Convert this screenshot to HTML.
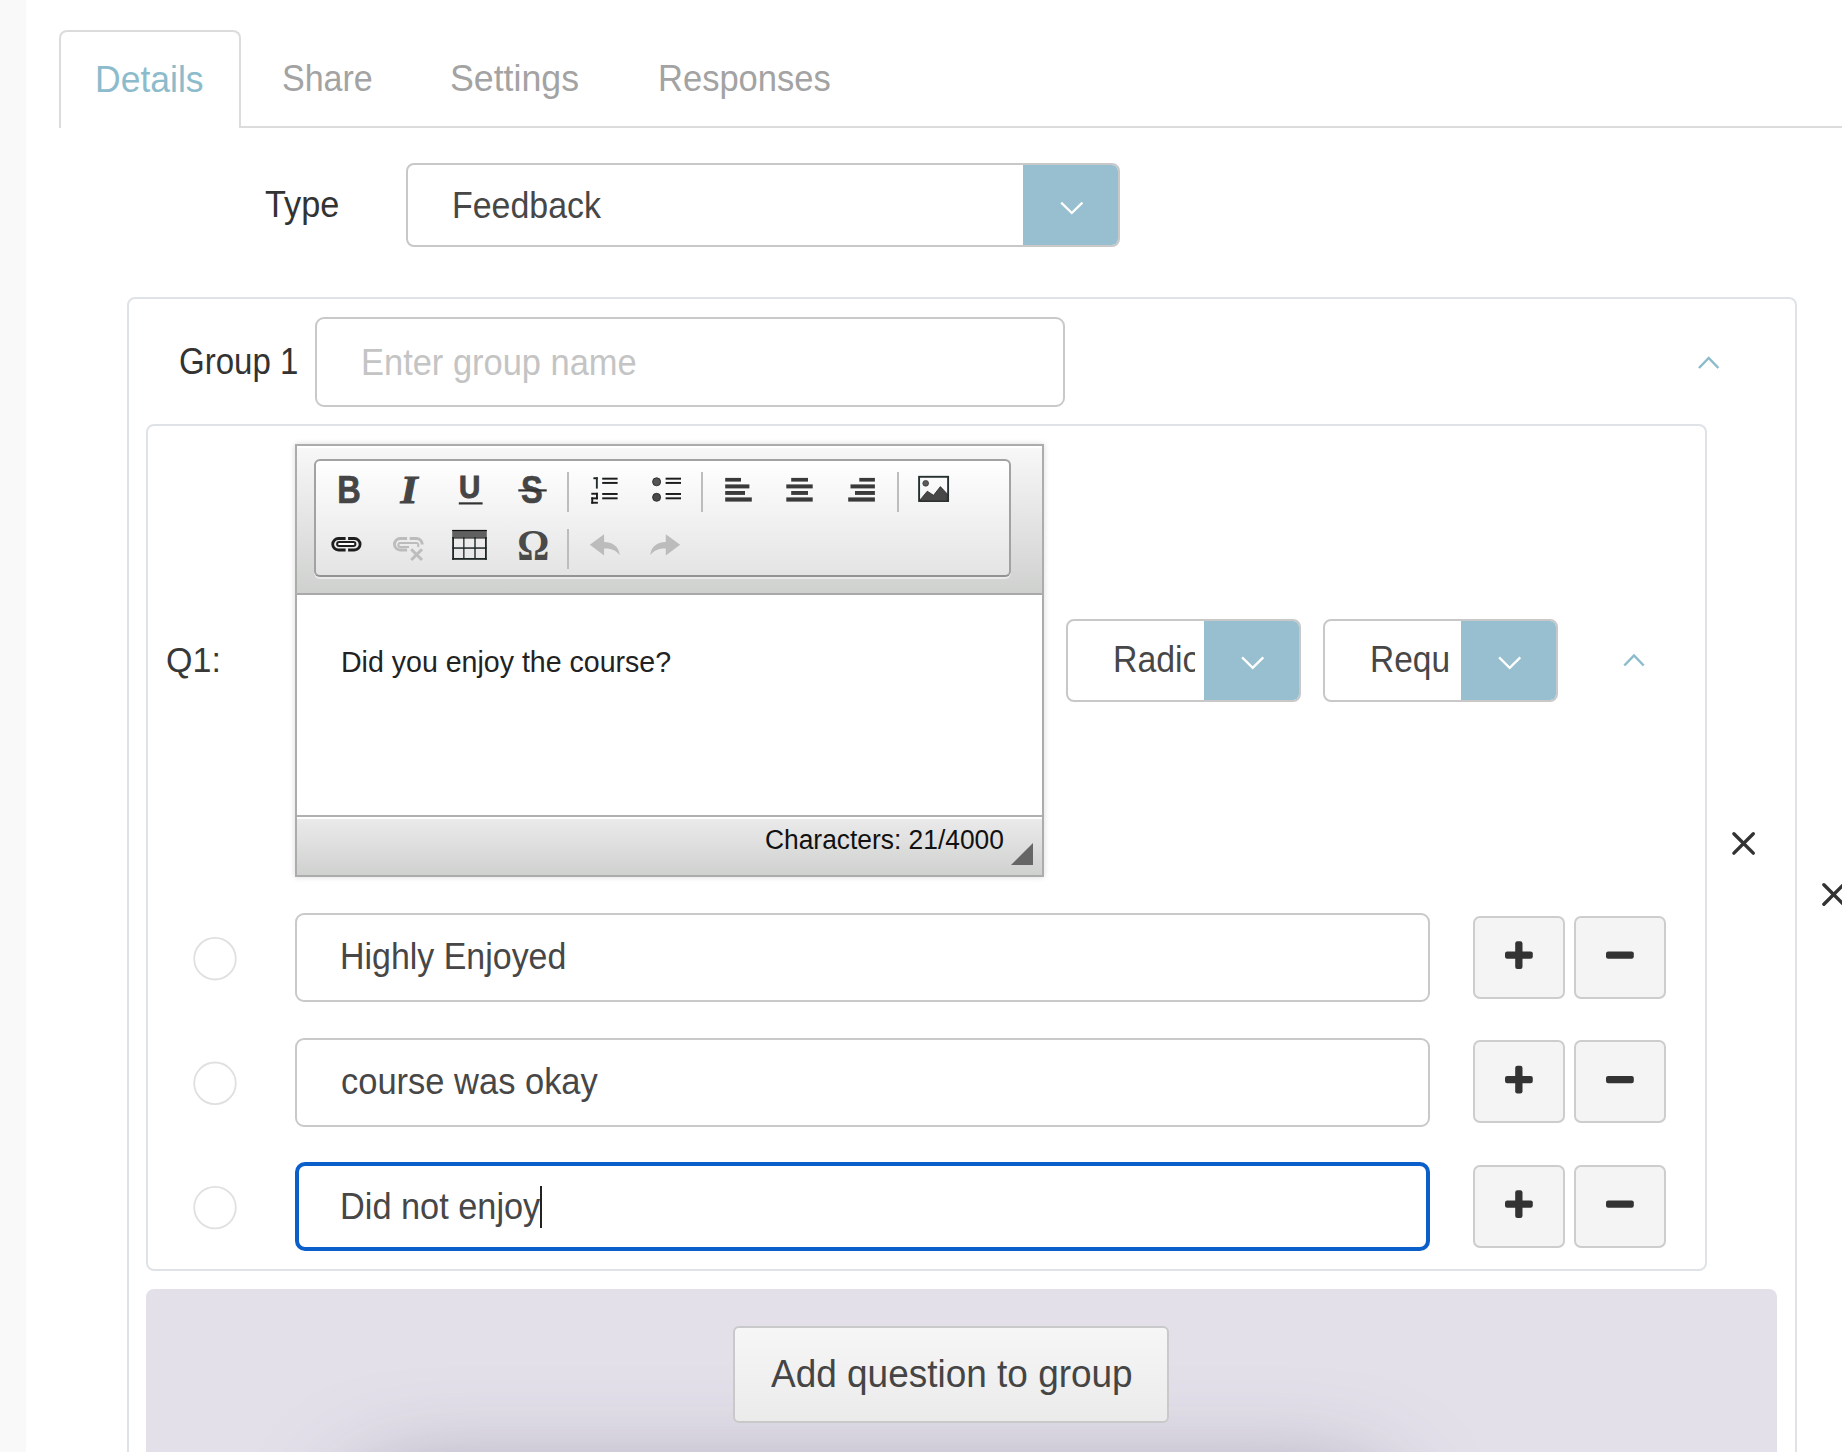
<!DOCTYPE html>
<html><head><meta charset="utf-8">
<style>
html,body{margin:0;padding:0;width:1842px;height:1452px;overflow:hidden;background:#fff;font-family:"Liberation Sans",sans-serif;}
.a{position:absolute;box-sizing:border-box;}
.t{position:absolute;white-space:nowrap;line-height:1;transform-origin:0 0;}
#strip{left:0;top:0;width:26px;height:1452px;background:#f9f9f9;}
#tab{left:59px;top:30px;width:182px;height:98px;border:2px solid #dcdcdc;border-bottom:none;border-radius:8px 8px 0 0;background:#fff;}
#tabline{left:239px;top:126px;width:1603px;height:2px;background:#dcdcdc;}
.tabtxt{font-size:36px;color:#a3a3a3;}
.dd{border:2px solid #c8c8c8;border-radius:8px;background:#fff;overflow:hidden;}
.ddb{position:absolute;top:0;bottom:0;right:0;background:#97bfcf;}
.box{border:2px solid #dfe3e7;border-radius:8px;}
.inp{border:2px solid #c9c9c9;border-radius:9px;background:#fff;}
.btn{border:2px solid #cdcdcd;border-radius:7px;background:#f4f4f4;}
.opt{font-size:36px;color:#474747;}
#svg{position:absolute;left:0;top:0;width:1842px;height:1452px;}
</style></head><body>
<div class="a" id="strip"></div>
<div class="a" id="tab"></div>
<div class="a" id="tabline"></div>
<div class="t tabtxt" style="left:94.7px;top:61.5px;transform:scaleX(0.9868);color:#8cbbcc;">Details</div>
<div class="t tabtxt" style="left:281.5px;top:61.2px;transform:scaleX(0.9441);">Share</div>
<div class="t tabtxt" style="left:449.8px;top:61px;transform:scaleX(0.9921);">Settings</div>
<div class="t tabtxt" style="left:657.6px;top:61px;transform:scaleX(0.9591);">Responses</div>

<div class="t" style="left:265.2px;top:185.8px;font-size:37px;color:#333;transform:scaleX(0.9269);">Type</div>
<div class="a dd" style="left:406px;top:163px;width:714px;height:84px;">
  <div class="ddb" style="width:95px;"></div>
</div>
<div class="t opt" style="left:451.7px;top:187.6px;transform:scaleX(0.9419);">Feedback</div>

<div class="a box" style="left:127px;top:297px;width:1670px;height:1300px;"></div>
<div class="t" style="left:178.9px;top:344.2px;font-size:36px;color:#333;transform:scaleX(0.918);">Group 1</div>
<div class="a inp" style="left:315px;top:317px;width:750px;height:90px;"></div>
<div class="t" style="left:360.5px;top:344.6px;font-size:36px;color:#c4c4c4;transform:scaleX(0.9567);">Enter group name</div>

<div class="a box" style="left:146px;top:424px;width:1561px;height:847px;"></div>
<div class="t" style="left:165.9px;top:642.8px;font-size:34.5px;color:#383838;transform:scaleX(0.9863);">Q1:</div>

<!-- editor -->
<div class="a" style="left:295px;top:444px;width:749px;height:433px;border:2px solid #acacac;box-shadow:0 0 6px rgba(0,0,0,.15);background:#fff;"></div>
<div class="a" style="left:297px;top:446px;width:745px;height:149px;background:linear-gradient(#f8f8f8,#cfd1cf);border-bottom:2px solid #a9a9a9;box-shadow:inset 0 2px 0 #fff;"></div>
<div class="a" style="left:314px;top:459px;width:697px;height:118px;border:2px solid #a2a2a2;border-bottom-color:#939393;border-radius:6px;background:linear-gradient(#fff,#e4e4e4);box-shadow:0 2px 0 rgba(255,255,255,.5);"></div>
<div class="a" style="left:297px;top:815px;width:745px;height:60px;background:linear-gradient(#ebebeb,#cfd1cf);border-top:2px solid #b0b0b0;box-shadow:inset 0 2px 0 #fff;"></div>
<div class="t" style="left:765.3px;top:826.5px;font-size:27px;color:#111;transform:scaleX(0.9765);">Characters: 21/4000</div>
<div class="t" style="left:340.7px;top:646.5px;font-size:30px;color:#222;transform:scaleX(0.9517);">Did you enjoy the course?</div>

<div class="a dd" style="left:1066px;top:619px;width:235px;height:83px;"><div class="ddb" style="width:95px;"></div>
  <div style="position:absolute;left:0;top:0;width:127px;height:79px;overflow:hidden;"><div class="t opt" style="left:44.5px;top:21.3px;transform:scaleX(0.94);">Radio</div></div>
</div>
<div class="a dd" style="left:1323px;top:619px;width:235px;height:83px;"><div class="ddb" style="width:95px;"></div>
  <div style="position:absolute;left:0;top:0;width:125px;height:79px;overflow:hidden;"><div class="t opt" style="left:45.3px;top:21.3px;transform:scaleX(0.9296);">Required</div></div>
</div>

<!-- options -->
<div class="a inp" style="left:295px;top:913px;width:1135px;height:89px;"></div>
<div class="t opt" style="left:340.2px;top:939px;transform:scaleX(0.9426);">Highly Enjoyed</div>
<div class="a btn" style="left:1473px;top:916px;width:92px;height:83px;"></div>
<div class="a btn" style="left:1574px;top:916px;width:92px;height:83px;"></div>

<div class="a inp" style="left:295px;top:1038px;width:1135px;height:89px;"></div>
<div class="t opt" style="left:340.7px;top:1064.1px;transform:scaleX(0.9577);">course was okay</div>
<div class="a btn" style="left:1473px;top:1040px;width:92px;height:83px;"></div>
<div class="a btn" style="left:1574px;top:1040px;width:92px;height:83px;"></div>

<div class="a inp" style="left:295px;top:1162px;width:1135px;height:89px;border:4px solid #0b5fcb;border-radius:10px;"></div>
<div class="t opt" style="left:339.8px;top:1188.7px;transform:scaleX(0.9531);">Did not enjoy</div>
<div class="a" style="left:540px;top:1186px;width:2px;height:42px;background:#222;"></div>
<div class="a btn" style="left:1473px;top:1165px;width:92px;height:83px;"></div>
<div class="a btn" style="left:1574px;top:1165px;width:92px;height:83px;"></div>

<div class="a" style="left:146px;top:1289px;width:1631px;height:200px;background:#e3e0ea;border-radius:8px;overflow:hidden;">
  <div style="position:absolute;left:224px;top:215px;width:1000px;height:100px;border-radius:50px;background:#8a8496;box-shadow:0 0 90px 30px rgba(100,92,116,.5);"></div>
</div>
<div class="a" style="left:733px;top:1326px;width:436px;height:97px;border:2px solid #c9c9c9;border-radius:6px;background:linear-gradient(#f6f6f6,#ebebeb);"></div>
<div class="t" style="left:770.7px;top:1355.2px;font-size:38.5px;color:#454545;transform:scaleX(0.96);">Add question to group</div>

<svg id="svg" viewBox="0 0 1842 1452">
  <!-- down chevrons -->
  <g fill="none" stroke="#fff" stroke-width="2.3" stroke-linecap="butt" stroke-linejoin="miter">
    <polyline points="1061.2,202.6 1071.8,213 1082.4,202.6"/>
    <polyline points="1242.1,657.4 1252.7,667.8 1263.3,657.4"/>
    <polyline points="1499.1,657.4 1509.7,667.8 1520.3,657.4"/>
  </g>
  <!-- up chevrons -->
  <g fill="none" stroke="#8cbbcc" stroke-width="2.5">
    <polyline points="1699,368 1708.7,358 1718.4,368"/>
    <polyline points="1624.3,665.5 1634,655.5 1643.7,665.5"/>
  </g>
  <!-- X icons -->
  <g fill="none" stroke="#333" stroke-width="3.4" stroke-linecap="round">
    <path d="M1733.9,833.7 L1753.3,853.1 M1753.3,833.7 L1733.9,853.1"/>
    <path d="M1823.9,884.8 L1843.3,904.2 M1843.3,884.8 L1823.9,904.2"/>
  </g>
  <!-- radio circles -->
  <g fill="#fff" stroke="#e0e0e0" stroke-width="1.8">
    <circle cx="215" cy="958.7" r="20.8"/>
    <circle cx="215" cy="1083.3" r="20.8"/>
    <circle cx="215" cy="1207.6" r="20.8"/>
  </g>
  <!-- plus / minus -->
  <g fill="#333">
    <rect x="1505" y="951.4" width="27.8" height="7.3" rx="2.2"/><rect x="1515.2" y="941.2" width="7.3" height="27.8" rx="2.2"/>
    <rect x="1606" y="951.4" width="27.8" height="7.3" rx="2.2"/>
    <rect x="1505" y="1075.9" width="27.8" height="7.3" rx="2.2"/><rect x="1515.2" y="1065.7" width="7.3" height="27.8" rx="2.2"/>
    <rect x="1606" y="1075.9" width="27.8" height="7.3" rx="2.2"/>
    <rect x="1505" y="1200.4" width="27.8" height="7.3" rx="2.2"/><rect x="1515.2" y="1190.2" width="7.3" height="27.8" rx="2.2"/>
    <rect x="1606" y="1200.4" width="27.8" height="7.3" rx="2.2"/>
  </g>
  <!-- toolbar separators -->
  <g fill="#bdbdbd">
    <rect x="567" y="472" width="2" height="40"/>
    <rect x="701" y="472" width="2" height="40"/>
    <rect x="897" y="472" width="2" height="40"/>
    <rect x="567" y="529" width="2" height="40"/>
  </g>
  <!-- B I U S -->
  <g fill="#454545" stroke="#454545" stroke-width="0.7" font-family="Liberation Sans" font-weight="bold">
    <text x="0" y="0" font-size="38.8" transform="translate(337.2,502.6) scale(0.84,0.99)">B</text>
    <text x="0" y="0" font-size="38.8" transform="translate(459,497.6) scale(0.76,0.8)" stroke-width="1.2">U</text>
    <text x="0" y="0" font-size="38.8" transform="translate(521,502.6) scale(0.84,0.99)">S</text>
  </g>
  <text x="0" y="0" font-family="Liberation Serif" font-weight="bold" font-style="italic" font-size="38.8" fill="#454545" stroke="#454545" stroke-width="0.9" transform="translate(400.5,502.8) scale(1.13,1.055)">I</text>
  <rect x="458.8" y="502.3" width="23.8" height="2.2" fill="#333"/>
  <rect x="518.3" y="489.3" width="28.4" height="2.2" fill="#333"/>
  <!-- numbered list -->
  <g fill="#1c1c1c">
    <rect x="593.4" y="477.3" width="4.4" height="1.9"/>
    <rect x="595.9" y="477.3" width="1.9" height="11.3" fill="#243030"/>
    <rect x="591.3" y="492.8" width="6.5" height="1.9"/>
    <rect x="596.0" y="492.8" width="1.9" height="6.5"/>
    <rect x="591.3" y="497.4" width="6.6" height="1.9"/>
    <rect x="591.3" y="497.4" width="1.9" height="6.3"/>
    <rect x="591.3" y="501.8" width="6.6" height="1.9"/>
    <rect x="602.2" y="477.7" width="15.4" height="1.95"/>
    <rect x="602.2" y="481.95" width="15.4" height="1.95"/>
    <rect x="602.2" y="493" width="15.4" height="1.95"/>
    <rect x="602.2" y="497.35" width="15.4" height="1.95"/>
  </g>
  <!-- bullet list -->
  <g fill="#1c1c1c">
    <circle cx="656.6" cy="481.8" r="4.0" fill="#555" stroke="#282828" stroke-width="0.9"/>
    <circle cx="656.6" cy="497.3" r="4.0" fill="#4a4a4a" stroke="#282828" stroke-width="0.9"/>
    <rect x="665.6" y="477.7" width="15.4" height="1.95"/>
    <rect x="665.6" y="481.95" width="15.4" height="1.95"/>
    <rect x="665.6" y="493" width="15.4" height="1.95"/>
    <rect x="665.6" y="497.35" width="15.4" height="1.95"/>
  </g>
  <!-- align icons -->
  <g fill="#3a3a3a">
    <rect x="725.2" y="477.9" width="15.8" height="3.7"/>
    <rect x="725.2" y="484.4" width="24.2" height="4"/>
    <rect x="725.2" y="491" width="19.8" height="3.9"/>
    <rect x="725.2" y="497.4" width="26.6" height="4.2"/>
    <rect x="791.2" y="477.9" width="16.8" height="3.7"/>
    <rect x="786.3" y="484.4" width="26.4" height="4"/>
    <rect x="791.2" y="491" width="16.8" height="3.9"/>
    <rect x="786.3" y="497.4" width="26.4" height="4.2"/>
    <rect x="859.3" y="477.9" width="15.6" height="3.7"/>
    <rect x="850.5" y="484.4" width="24.4" height="4"/>
    <rect x="855" y="491" width="19.9" height="3.9"/>
    <rect x="848.2" y="497.4" width="26.7" height="4.2"/>
  </g>
  <!-- image icon -->
  <rect x="919.1" y="476.8" width="29" height="24.2" fill="none" stroke="#263030" stroke-width="1.9"/>
  <circle cx="925.7" cy="483.3" r="2.9" fill="#5a5a5a" stroke="#333" stroke-width="0.7"/>
  <path d="M920,500 L927.3,491.2 L933.5,495.3 L940.4,486.6 L947.3,494 L947.3,501 L920,501 Z" fill="#474747" stroke="#2a2a2a" stroke-width="0.8"/>
  <!-- link -->
  <g fill="none" stroke="#1e1e1e" stroke-width="2.8">
    <path d="M345.6,538.5 L338.45,538.5 A5.75,5.75 0 0 0 338.45,550 L345.6,550"/>
    <path d="M348.1,538.5 L354.35,538.5 A5.75,5.75 0 0 1 354.35,550 L348.1,550"/>
  </g>
  <rect x="337.1" y="542.1" width="18.3" height="4" rx="2" fill="#fff" stroke="#1e1e1e" stroke-width="2"/>
  <!-- unlink -->
  <g fill="none" stroke="#bcbcbc" stroke-width="2.8">
    <path d="M407.1,538.5 L400.2,538.5 A5.75,5.75 0 0 0 400.2,550 L407.1,550"/>
    <path d="M409.7,538.5 L416.4,538.5 A5.75,5.75 0 0 1 422.2,544.5"/>
  </g>
  <path d="M409,547.1 L400.3,547.1 A2,2 0 0 1 400.3,543.1 L416.5,543.1 A2,2 0 0 1 417.5,546.8" fill="none" stroke="#bcbcbc" stroke-width="2"/>
  <path d="M411.2,549.2 L422,560 M422,549.2 L411.2,560" fill="none" stroke="#bdbdbd" stroke-width="3"/>
  <!-- table -->
  <g fill="#1e2626">
    <rect x="452.2" y="537" width="34.6" height="1.6" fill="#333"/>
    <rect x="452.2" y="530" width="34.6" height="7.6" fill="#606060"/>
    <rect x="452.2" y="529.9" width="34.6" height="1.2" fill="#111"/>
    <rect x="452.2" y="537" width="1.8" height="22.8"/>
    <rect x="485" y="537" width="1.8" height="22.8"/>
    <rect x="452.2" y="558" width="34.6" height="1.8"/>
    <rect x="452.2" y="547.3" width="34.6" height="1.5"/>
    <rect x="463.2" y="537" width="1.3" height="22"/>
    <rect x="474.3" y="537" width="1.4" height="22"/>
  </g>
  <!-- omega -->
  <text x="0" y="0" font-family="Liberation Serif" font-weight="bold" font-size="40" fill="#4a4a4a" transform="translate(517.2,560) scale(1.0,1.1)">&#937;</text>
  <!-- undo / redo -->
  <g fill="#bcbcbc">
    <path d="M589.8,544.8 L604.1,534.3 L604.1,542 C612,542 619,546 619.7,555.2 C616,550 611,548.5 604.1,548.5 L604.1,555.6 Z"/>
    <path d="M680.1,544.8 L665.8,534.3 L665.8,542 C658,542 651,546 650.3,555.2 C654,550 659,548.5 665.8,548.5 L665.8,555.6 Z"/>
  </g>
  <!-- editor resizer -->
  <polygon points="1033,843 1033,865 1011,865" fill="#666"/>
</svg>
</body></html>
